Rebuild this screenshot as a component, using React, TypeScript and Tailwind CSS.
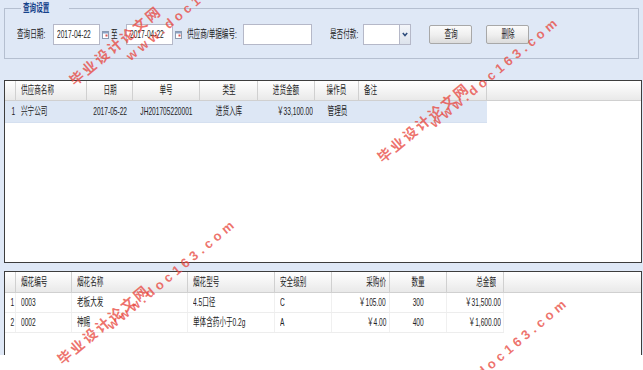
import * as React from "react";

type Align = "l" | "c" | "r" | "rn" | "r2" | "r7";

const alignCls: Record<Align, string> = {
  l: "justify-start pl-[5px]",
  c: "justify-center",
  r: "justify-end pr-[3px]",
  rn: "justify-end pr-[1px]",
  r2: "justify-end pr-[2px]",
  r7: "justify-end pr-[7px]",
};

const originCls: Record<Align, string> = {
  l: "origin-left",
  c: "origin-center",
  r: "origin-right",
  rn: "origin-right",
  r2: "origin-right",
  r7: "origin-right",
};

// the screenshot text is squeezed sideways, so every label is scaled on x
function T({ children, o = "origin-left" }: { children: React.ReactNode; o?: string }) {
  return <span className={`inline-block whitespace-nowrap scale-x-[0.6] ${o}`}>{children}</span>;
}

type Col = { w: string; label: string; h: Align; a: Align };

const cols1: Col[] = [
  { w: "w-[11px]", label: "", h: "c", a: "rn" },
  { w: "w-[71px]", label: "供应商名称", h: "l", a: "l" },
  { w: "w-[46px]", label: "日期", h: "c", a: "c" },
  { w: "w-[67px]", label: "单号", h: "c", a: "c" },
  { w: "w-[58px]", label: "类型", h: "c", a: "c" },
  { w: "w-[57px]", label: "进货金额", h: "c", a: "r2" },
  { w: "w-[44px]", label: "操作员", h: "c", a: "c" },
  { w: "w-[128px]", label: "备注", h: "l", a: "l" },
];

const rows1 = [["1", "兴宁公司", "2017-05-22", "JH201705220001", "进货入库", "￥33,100.00", "管理员", ""]];

const cols2: Col[] = [
  { w: "w-[11px]", label: "", h: "c", a: "rn" },
  { w: "w-[56px]", label: "烟花编号", h: "l", a: "l" },
  { w: "w-[116px]", label: "烟花名称", h: "l", a: "l" },
  { w: "w-[87px]", label: "烟花型号", h: "l", a: "l" },
  { w: "w-[57px]", label: "安全级别", h: "l", a: "l" },
  { w: "w-[58px]", label: "采购价", h: "r", a: "r" },
  { w: "w-[57px]", label: "数量", h: "c", a: "c" },
  { w: "w-[57px]", label: "总金额", h: "r7", a: "r2" },
];

const rows2 = [
  ["1", "0003", "老板大发", "4.5口径", "C", "￥105.00", "300", "￥31,500.00"],
  ["2", "0002", "神赐", "单体含药小于0.2g", "A", "￥4.00", "400", "￥1,600.00"],
];

function cn(...parts: string[]) {
  return parts.filter(Boolean).join(" ");
}

function GridHeader({ cols, h }: { cols: Col[]; h: string }) {
  return (
    <div className={`flex ${h} shrink-0 border-b border-[#d0d0d0] bg-linear-to-b from-white to-[#e9e9e9]`}>
      {cols.map((c, i) => (
        <div key={i} className={`flex items-center shrink-0 border-r border-[#d0d0d0] ${c.w} ${alignCls[c.h]}`}>
          {c.label && <T o={originCls[c.h]}>{c.label}</T>}
        </div>
      ))}
    </div>
  );
}

function GridRow({ cols, row, h, selected }: { cols: Col[]; row: string[]; h: string; selected?: boolean }) {
  return (
    <div
      className={cn(
        "flex w-fit",
        h,
        selected ? "bg-[#dde7f5] border-b border-[#d5e0f0]" : "bg-white border-b border-[#ededed]"
      )}
    >
      {cols.map((c, i) => (
        <div
          key={i}
          className={cn(
            "flex items-center shrink-0",
            c.w,
            alignCls[c.a],
            selected ? "" : "border-r border-[#f0f0f0]"
          )}
        >
          {row[i] && <T o={originCls[c.a]}>{row[i]}</T>}
        </div>
      ))}
    </div>
  );
}

function CalendarIcon() {
  return (
    <svg width="7" height="8" viewBox="0 0 7 8">
      <rect x="0.5" y="0.5" width="6" height="7" fill="#fff" stroke="#8c9bb0" />
      <rect x="1" y="1" width="5" height="1.5" fill="#8aa0c4" />
      <rect x="3.5" y="3.5" width="2" height="2" fill="#d9534f" />
    </svg>
  );
}

function Box({ w, children }: { w: string; children?: React.ReactNode }) {
  return (
    <div className={`flex items-center shrink-0 h-[21px] border border-[#b5b8c8] bg-white pl-[3px] ${w}`}>
      {children}
    </div>
  );
}

function Trigger() {
  return (
    <div className="flex items-center justify-center shrink-0 w-[10px] h-[21px]">
      <CalendarIcon />
    </div>
  );
}

function Btn({ label }: { label: string }) {
  return (
    <div className="flex items-center justify-center shrink-0 w-[43px] h-[19px] rounded-[2px] border border-[#a8a8a8] bg-linear-to-b from-[#fbfbfb] via-[#f0f0f0] to-[#dcdcdc]">
      <T o="origin-center">{label}</T>
    </div>
  );
}

function Mark({ pos, kind }: { pos: string; kind: "cn" | "www" }) {
  return (
    <div
      className={cn(
        "pointer-events-none absolute -translate-x-1/2 -translate-y-1/2 rotate-[-40deg] whitespace-nowrap font-bold text-[#e8453c]/75",
        pos,
        kind === "cn" ? "text-[14px] tracking-[2.5px]" : "text-[13px] tracking-[4px]"
      )}
    >
      {kind === "cn" ? "毕业设计论文网" : "www.doc163.com"}
    </div>
  );
}

export default function App() {
  return (
    <div className="relative flex flex-col w-[643px] h-[370px] overflow-hidden bg-[#dfe8f6] pt-[1px] text-[11px] leading-[13px] text-[#222] font-[family-name:'Liberation_Sans','Noto_Sans_CJK_SC',sans-serif]">
      {/* Query settings */}
      <fieldset className="mx-[4px] h-[58px] shrink-0 border border-[#b5bfd0] px-[12px]">
        <legend className="ml-[4px] px-[2px] h-[14px] leading-[14px] font-bold text-[#15428b]">
          <T>查询设置</T>
        </legend>
        <div className="mt-[9px] flex items-center h-[21px]">
          <div className="w-[36px] shrink-0"><T>查询日期:</T></div>
          <Box w="w-[47px]"><T>2017-04-22</T></Box>
          <Trigger />
          <div className="w-[16px] shrink-0 pl-[1px]"><T>至</T></div>
          <Box w="w-[47px]"><T>2017-04-22</T></Box>
          <Trigger />
          <div className="w-[60px] shrink-0 pl-[4px]"><T>供应商/单据编号:</T></div>
          <Box w="w-[69px]" />
          <div className="w-[18px] shrink-0" />
          <div className="w-[33px] shrink-0"><T>是否付款:</T></div>
          <Box w="w-[37px]" />
          <div className="flex items-center justify-center shrink-0 w-[11px] h-[21px] border border-l-0 border-[#b5b8c8] bg-linear-to-b from-[#f4f6fa] to-[#dde3ec]">
            <svg width="6" height="5" viewBox="0 0 6 5">
              <path d="M0.8 1 L3 3.6 L5.2 1" fill="none" stroke="#2f4d7c" strokeWidth="1.5" />
            </svg>
          </div>
          <div className="w-[18px] shrink-0" />
          <Btn label="查询" />
          <div className="w-[14px] shrink-0" />
          <Btn label="删除" />
        </div>
      </fieldset>

      {/* Purchase orders */}
      <div className="mx-[4px] mt-[21px] h-[183px] w-[638px] shrink-0 flex flex-col border border-[#3d3d3d] bg-white">
        <GridHeader cols={cols1} h="h-[20px]" />
        {rows1.map((r, i) => (
          <GridRow key={i} cols={cols1} row={r} h="h-[22px]" selected />
        ))}
      </div>

      {/* Order items */}
      <div className="mx-[4px] mt-[8px] h-[84px] w-[638px] shrink-0 flex flex-col border border-b-0 border-[#3d3d3d] bg-white">
        <GridHeader cols={cols2} h="h-[21px]" />
        {rows2.map((r, i) => (
          <GridRow key={i} cols={cols2} row={r} h="h-[20px]" />
        ))}
      </div>
      <div className="flex-1 bg-white" />

      <Mark kind="cn" pos="left-[116px] top-[46px]" />
      <Mark kind="www" pos="left-[191px] top-[5px]" />
      <Mark kind="cn" pos="left-[424px] top-[123px]" />
      <Mark kind="www" pos="left-[495px] top-[72px]" />
      <Mark kind="cn" pos="left-[104px] top-[325px]" />
      <Mark kind="www" pos="left-[172px] top-[274px]" />
      <Mark kind="www" pos="left-[504px] top-[353px]" />
    </div>
  );
}
